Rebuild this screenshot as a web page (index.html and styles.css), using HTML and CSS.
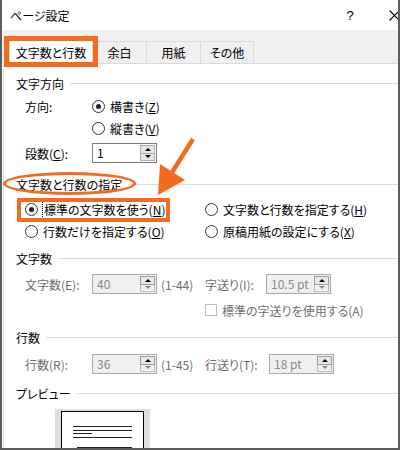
FILE: index.html
```html
<!DOCTYPE html>
<html lang="ja">
<head>
<meta charset="utf-8">
<link rel="stylesheet" href="styles.css">
</head>
<body>
<div class="window">
  <div class="titlebar">
    <span class="title">ページ設定</span>
    <span class="help">?</span>
    <span class="close"><svg width="11" height="11" viewBox="0 0 11 11"><path d="M0.5 0.5 L10.5 10.5 M10.5 0.5 L0.5 10.5" stroke="#000" stroke-width="1.1" fill="none"/></svg></span>
  </div>
  <div class="tabstrip">
    <div class="tab active">文字数と行数</div>
    <div class="tab first">余白</div>
    <div class="tab">用紙</div>
    <div class="tab w53">その他</div>
  </div>
  <div class="page">
    <div class="gh">文字方向</div>
    <div class="row m3"><span class="lbl">方向:</span><span class="radio checked"><span class="circ"></span><span>横書き(<u>Z</u>)</span></span></div>
    <div class="row m2"><span class="lbl"></span><span class="radio"><span class="circ"></span><span>縦書き(<u>V</u>)</span></span></div>
    <div class="row m5"><span class="lbl">段数(<u>C</u>):</span>
      <div class="spin"><span class="val">1</span><span class="btns"><span class="btn"><i class="up"></i></span><span class="btn"><i class="down"></i></span></span></div>
    </div>

    <div class="gh m11">文字数と行数の指定</div>
    <div class="opts">
      <span class="radio checked"><span class="circ"></span><span class="focus">標準の文字数を使う(<u>N</u>)</span></span>
      <span class="radio"><span class="circ"></span><span>文字数と行数を指定する(<u>H</u>)</span></span>
      <span class="radio"><span class="circ"></span><span>行数だけを指定する(<u>O</u>)</span></span>
      <span class="radio"><span class="circ"></span><span>原稿用紙の設定にする(<u>X</u>)</span></span>
    </div>

    <div class="gh m6">文字数</div>
    <div class="row m6 dis"><span class="lbl">文字数(E):</span>
      <div class="spin off"><span class="val">40</span><span class="btns"><span class="btn"><i class="up"></i></span><span class="btn"><i class="down"></i></span></span></div>
      <span class="range">(1-44)</span>
      <span class="lbl2">字送り(I):</span>
      <div class="spin off"><span class="val">10.5 pt</span><span class="btns"><span class="btn"><i class="up"></i></span><span class="btn"><i class="down"></i></span></span></div>
    </div>
    <div class="row m6 dis chkrow"><span class="chk"></span><span>標準の字送りを使用する(A)</span></div>

    <div class="gh m7">行数</div>
    <div class="row m7 dis"><span class="lbl">行数(R):</span>
      <div class="spin off"><span class="val">36</span><span class="btns"><span class="btn"><i class="up"></i></span><span class="btn"><i class="down"></i></span></span></div>
      <span class="range">(1-45)</span>
      <span class="lbl2 wide">行送り(T):</span>
      <div class="spin off"><span class="val">18 pt</span><span class="btns"><span class="btn"><i class="up"></i></span><span class="btn"><i class="down"></i></span></span></div>
    </div>

    <div class="gh m9">プレビュー</div>
    <div class="preview">
      <div class="sheet">
        <span class="ln"></span>
        <span class="ln"></span>
        <span class="ln short"></span>
        <span class="ln"></span>
        <span class="ln gap indent"></span>
      </div>
    </div>
  </div>

  <div class="mark tabmark"></div>
  <div class="mark ellipse"></div>
  <div class="mark optmark"></div>
  <svg class="arrow" width="400" height="450" viewBox="0 0 400 450">
    <line x1="193" y1="139" x2="171" y2="174" stroke="#f26b1f" stroke-width="4.5"/>
    <polygon points="160,164 185,180 158,195" fill="#f26b1f"/>
  </svg>
</div>
</body>
</html>
```

FILE: styles.css
```css
* { box-sizing: border-box; }
body {
  margin: 0;
  font-family: "Noto Sans CJK JP", "Noto Sans", sans-serif;
  font-size: 12px;
  font-feature-settings: "palt";
  color: #000;
  background: #fff;
}
u { text-underline-offset: 1px; }
.window {
  position: relative;
  width: 400px;
  height: 450px;
  border: 2px solid #5e5e5e;
  border-top: none;
  overflow: hidden;
  background: #fff;
}
.titlebar {
  height: 30px;
  display: flex;
  align-items: center;
  padding-left: 8px;
}
.title { width: 335px; flex-shrink: 0; }
.help { width: 10px; flex-shrink: 0; text-align: center; font-size: 13px; font-family: "Liberation Sans", sans-serif; margin-right: 34px; }
.close { width: 9px; flex-shrink: 0; display: flex; align-items: center; }
.close svg { flex-shrink: 0; }

.tabstrip {
  height: 33px;
  background: #f0f0f0;
  display: flex;
  align-items: flex-end;
  padding-left: 7px;
}
.tab {
  height: 22px;
  width: 54px;
  border-top: 1px solid #d9d9d9;
  border-right: 1px solid #d9d9d9;
  display: flex;
  align-items: center;
  justify-content: center;
  background: #f0f0f0;
}
.tab.first { border-left: none; }
.tab.w53 { width: 53px; }
.tab.active {
  width: 84px;
  height: 24px;
  background: #fff;
  border-left: 1px solid #d9d9d9;
  margin-bottom: -1px;
  position: relative;
  z-index: 1;
}

.page {
  border-top: 1px solid #d9d9d9;
  border-left: 1px solid #e3e3e3;
  margin-left: 1px;
  padding: 9px 0 0 12px;
}
.gh {
  height: 20px;
  display: flex;
  align-items: center;
  gap: 6px;
}
.gh::after {
  content: "";
  flex: 1;
  height: 1px;
  background: #dcdcdc;
}
.m2 { margin-top: 2px; }
.m3 { margin-top: 3px; }
.m5 { margin-top: 5px; }
.m6 { margin-top: 6px; }
.m7 { margin-top: 7px; }
.m9 { margin-top: 9px; }
.m11 { margin-top: 11px; }

.row {
  height: 20px;
  display: flex;
  align-items: center;
  padding-left: 9px;
}
.lbl { width: 67px; flex-shrink: 0; }
.dis { color: #6d6d6d; }

.radio {
  display: flex;
  align-items: center;
  gap: 5px;
  white-space: nowrap;
}
.circ {
  width: 13px;
  height: 13px;
  border-radius: 50%;
  border: 1px solid #333;
  background: #fff;
  position: relative;
  flex-shrink: 0;
}
.checked .circ::after {
  content: "";
  position: absolute;
  left: 3px; top: 3px; width: 5px; height: 5px;
  border-radius: 50%;
  background: #222;
}
.focus { outline: 1px dotted #000; outline-offset: 0; padding: 0 1px; }

.spin {
  width: 65px;
  height: 20px;
  border: 1px solid #7a7a7a;
  background: #fff;
  display: flex;
  flex-shrink: 0;
}
.spin .val { flex: 1; padding-left: 4px; line-height: 18px; }
.btns {
  width: 16px;
  display: flex;
  flex-direction: column;
  padding: 1px 1px 1px 0;
}
.btn {
  flex: 1;
  border: 1px solid #adadad;
  background: #e5e5e5;
  display: flex;
  align-items: center;
  justify-content: center;
}
.btn + .btn { border-top: none; }
.btn i { width: 0; height: 0; border-left: 3px solid transparent; border-right: 3px solid transparent; }
.btn i.up { border-bottom: 3px solid #000; }
.btn i.down { border-top: 3px solid #000; }
.spin.off { border-color: #a9a9a9; background: #f0f0f0; color: #8a8a8a; }
.spin.off .btn { background: #f0f0f0; border-color: #bdbdbd; }
.spin.off .btn:first-child { background: #e8e8e8; border-color: #9c9c9c; }
.spin.off .btn i.down { border-top-color: #8a8a8a; }

.range { width: 44px; margin-left: 4px; flex-shrink: 0; }
.lbl2 { width: 61px; flex-shrink: 0; }
.lbl2.wide { width: 64px; }

.opts {
  margin-top: 4px;
  padding-left: 9px;
  display: grid;
  grid-template-columns: 180px auto;
  grid-auto-rows: 22px;
  align-items: center;
}
.chkrow { padding-left: 189px; gap: 5px; }
.chk {
  width: 12px; height: 12px;
  border: 1px solid #bdbdbd;
  background: #fff;
  flex-shrink: 0;
}

.preview {
  margin-top: 6px;
  margin-left: 39px;
  width: 95px;
  height: 50px;
  background: #dedede;
  padding: 2px 6px 0;
}
.sheet {
  height: 60px;
  border: 1px solid #000;
  background: #fff;
  padding: 14px 11px 0 11px;
  display: flex;
  flex-direction: column;
  gap: 2.7px;
}
.ln { display: block; height: 1px; background: #222; width: 59px; }
.ln.short { width: 19px; }
.ln.gap { margin-top: 6px; }
.ln.indent { margin-left: 4px; width: 55px; }

.mark { position: absolute; pointer-events: none; }
.tabmark {
  left: 2px; top: 36px; width: 94px; height: 31px;
  border: 5px solid #f26b1f;
  z-index: 3;
}
.ellipse {
  left: 1px; top: 172px; width: 133px; height: 23px;
  border: 3px solid #f26b1f;
  border-radius: 50%;
}
.optmark {
  left: 15px; top: 198px; width: 153px; height: 24px;
  border: 4px solid #f26b1f;
}
.arrow { position: absolute; left: -2px; top: 0; pointer-events: none; }
```
